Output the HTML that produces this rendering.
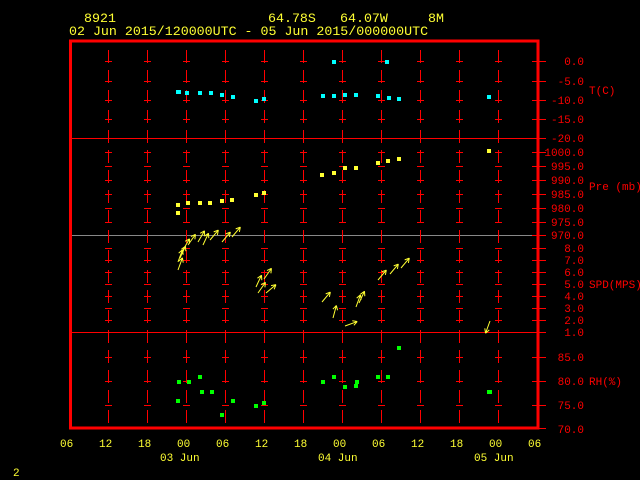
<!DOCTYPE html>
<html><head><style>
html,body{margin:0;padding:0;background:#000;}
svg{display:block}
text{font-family:"Liberation Mono",monospace;}
</style></head><body>
<svg width="640" height="480" viewBox="0 0 640 480" xmlns="http://www.w3.org/2000/svg">
<rect width="640" height="480" fill="#000"/>
<g fill="#ffff33" font-size="13.3">
<text x="84" y="22">8921</text>
<text x="268" y="22">64.78S</text>
<text x="340" y="22">64.07W</text>
<text x="428" y="22">8M</text>
<text x="69" y="35">02 Jun 2015/120000UTC - 05 Jun 2015/000000UTC</text>
</g>
<g stroke="#ff0000" stroke-width="1">
<line x1="70" y1="138.5" x2="546" y2="138.5"/>
<line x1="70" y1="332.5" x2="546" y2="332.5"/>
</g>
<line x1="70" y1="235.5" x2="540" y2="235.5" stroke="#888" stroke-width="1"/>
<g stroke="#ff0000" stroke-width="1" stroke-dasharray="13 7">
<line x1="108.5" y1="50" x2="108.5" y2="425"/>
<line x1="147.5" y1="50" x2="147.5" y2="425"/>
<line x1="186.5" y1="50" x2="186.5" y2="425"/>
<line x1="225.5" y1="50" x2="225.5" y2="425"/>
<line x1="264.5" y1="50" x2="264.5" y2="425"/>
<line x1="303.5" y1="50" x2="303.5" y2="425"/>
<line x1="342.5" y1="50" x2="342.5" y2="425"/>
<line x1="381.5" y1="50" x2="381.5" y2="425"/>
<line x1="420.5" y1="50" x2="420.5" y2="425"/>
<line x1="459.5" y1="50" x2="459.5" y2="425"/>
<line x1="498.5" y1="50" x2="498.5" y2="425"/>
</g>
<g stroke="#ff0000" stroke-width="1" id="ticks"></g>
<rect x="70.5" y="41" width="467.5" height="387" fill="none" stroke="#ff0000" stroke-width="3"/>
<g fill="#ff0000" font-size="11" text-anchor="end">
<text x="584" y="65">0.0</text><text x="584" y="85">-5.0</text><text x="584" y="104">-10.0</text><text x="584" y="123">-15.0</text><text x="584" y="142">-20.0</text>
<text x="584" y="156">1000.0</text><text x="584" y="170">995.0</text><text x="584" y="184">990.0</text><text x="584" y="198">985.0</text><text x="584" y="212">980.0</text><text x="584" y="226">975.0</text><text x="584" y="239">970.0</text>
<text x="584" y="252">8.0</text><text x="584" y="264">7.0</text><text x="584" y="276">6.0</text><text x="584" y="288">5.0</text><text x="584" y="300">4.0</text><text x="584" y="312">3.0</text><text x="584" y="324">2.0</text><text x="584" y="336">1.0</text>
<text x="584" y="361">85.0</text><text x="584" y="385">80.0</text><text x="584" y="409">75.0</text><text x="584" y="433">70.0</text>
</g>
<g fill="#ff0000" font-size="11">
<text x="589" y="94">T(C)</text>
<text x="589" y="190">Pre (mb)</text>
<text x="589" y="288">SPD(MPS)</text>
<text x="589" y="385">RH(%)</text>
</g>
<g fill="#ffff33" font-size="11">
<text x="60" y="447">06</text><text x="99" y="447">12</text><text x="138" y="447">18</text><text x="177" y="447">00</text><text x="216" y="447">06</text><text x="255" y="447">12</text><text x="294" y="447">18</text><text x="333" y="447">00</text><text x="372" y="447">06</text><text x="411" y="447">12</text><text x="450" y="447">18</text><text x="489" y="447">00</text><text x="528" y="447">06</text>
<text x="160" y="461">03 Jun</text><text x="318" y="461">04 Jun</text><text x="474" y="461">05 Jun</text>
<text x="13" y="476">2</text>
</g>
<g fill="#00ffff">
<rect x="176" y="90" width="5" height="4"/><rect x="185" y="91" width="4" height="4"/><rect x="198" y="91" width="4" height="4"/><rect x="209" y="91" width="4" height="4"/><rect x="220" y="93" width="4" height="4"/><rect x="231" y="95" width="4" height="4"/><rect x="254" y="99" width="4" height="4"/><rect x="262" y="97" width="4" height="4"/><rect x="321" y="94" width="4" height="4"/><rect x="332" y="94" width="4" height="4"/><rect x="343" y="93" width="4" height="4"/><rect x="354" y="93" width="4" height="4"/><rect x="376" y="94" width="4" height="4"/><rect x="387" y="96" width="4" height="4"/><rect x="397" y="97" width="4" height="4"/><rect x="487" y="95" width="4" height="4"/><rect x="332" y="60" width="4" height="4"/><rect x="385" y="60" width="4" height="4"/>
</g>
<g fill="#ffff33">
<rect x="176" y="203" width="4" height="4"/><rect x="176" y="211" width="4" height="4"/><rect x="186" y="201" width="4" height="4"/><rect x="198" y="201" width="4" height="4"/><rect x="208" y="201" width="4" height="4"/><rect x="220" y="199" width="4" height="4"/><rect x="230" y="198" width="4" height="4"/><rect x="254" y="193" width="4" height="4"/><rect x="262" y="191" width="4" height="4"/><rect x="320" y="173" width="4" height="4"/><rect x="332" y="171" width="4" height="4"/><rect x="343" y="166" width="4" height="4"/><rect x="354" y="166" width="4" height="4"/><rect x="376" y="161" width="4" height="4"/><rect x="386" y="159" width="4" height="4"/><rect x="397" y="157" width="4" height="4"/><rect x="487" y="149" width="4" height="4"/>
</g>
<g fill="#00ff00">
<rect x="177" y="380" width="4" height="4"/><rect x="187" y="380" width="4" height="4"/><rect x="198" y="375" width="4" height="4"/><rect x="200" y="390" width="4" height="4"/><rect x="210" y="390" width="4" height="4"/><rect x="176" y="399" width="4" height="4"/><rect x="220" y="413" width="4" height="4"/><rect x="231" y="399" width="4" height="4"/><rect x="254" y="404" width="4" height="4"/><rect x="262" y="401" width="4" height="4"/><rect x="321" y="380" width="4" height="4"/><rect x="332" y="375" width="4" height="4"/><rect x="343" y="385" width="4" height="4"/><rect x="354" y="384" width="4" height="4"/><rect x="355" y="380" width="4" height="4"/><rect x="376" y="375" width="4" height="4"/><rect x="386" y="375" width="4" height="4"/><rect x="397" y="346" width="4" height="4"/><rect x="487" y="390" width="5" height="4"/>
</g>
<g stroke="#ffff33" stroke-width="1" fill="none" id="arr"></g>
<script>
var t=document.getElementById('ticks'),ns='http://www.w3.org/2000/svg';
var xs=[108,147,186,225,264,303,342,381,420,459,498];
var ys=[61,81,100,119,152,166,180,194,208,222,248,260,272,284,296,308,320,357,381,405];
xs.forEach(function(x){ys.forEach(function(y){var l=document.createElementNS(ns,'line');l.setAttribute('x1',x-3);l.setAttribute('x2',x+4);l.setAttribute('y1',y+.5);l.setAttribute('y2',y+.5);t.appendChild(l);});});
ys.concat([138,235,332,428]).forEach(function(y){var l=document.createElementNS(ns,'line');l.setAttribute('x1',532);l.setAttribute('x2',546);l.setAttribute('y1',y+.5);l.setAttribute('y2',y+.5);t.appendChild(l);});
var a=document.getElementById('arr');
var ar=[[178,270,20],[178,262,20],[180,258,25],[183,250,30],[188,245,35],[198,242,30],[203,245,25],[210,240,40],[222,242,40],[232,237,40],[256,287,25],[258,293,35],[266,293,50],[264,279,35],[322,302,40],[333,318,15],[345,326,70],[356,307,20],[359,303,25],[378,280,40],[390,274,40],[401,268,40],[490,321,-160]];
ar.forEach(function(p){var x=p[0],y=p[1],ang=p[2]*Math.PI/180,L=13;var ex=x+L*Math.sin(ang),ey=y-L*Math.cos(ang);
var a1=ang+Math.PI+0.5,a2=ang+Math.PI-0.5;
var d='M'+x+' '+y+'L'+ex+' '+ey+'M'+ex+' '+ey+'l'+(5*Math.sin(a1))+' '+(-5*Math.cos(a1))+'M'+ex+' '+ey+'l'+(5*Math.sin(a2))+' '+(-5*Math.cos(a2));
var e=document.createElementNS(ns,'path');e.setAttribute('d',d);a.appendChild(e);});
</script>
</svg>
</body></html>
